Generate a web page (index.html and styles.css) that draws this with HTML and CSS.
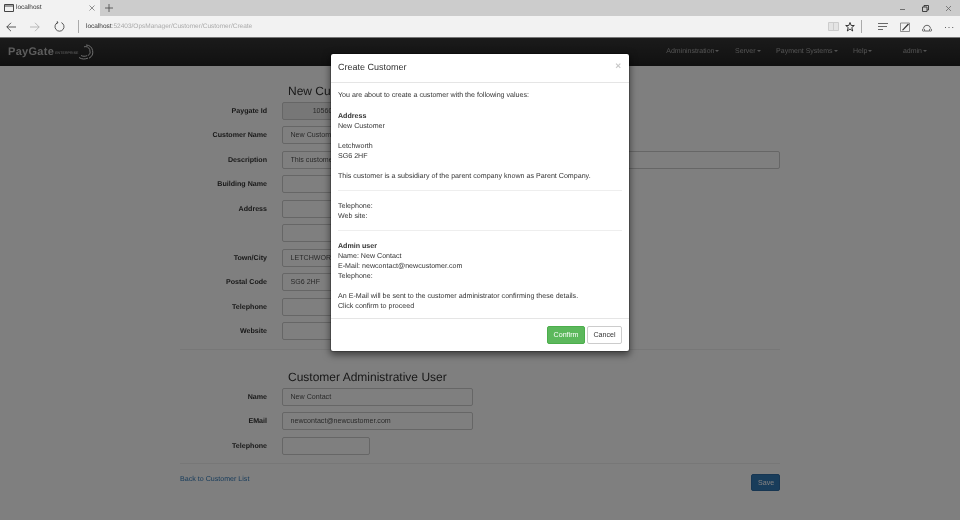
FILE: index.html
```html
<!DOCTYPE html>
<html lang="en">
<head>
<meta charset="utf-8">
<title>localhost</title>
<link rel="stylesheet" href="styles.css">
</head>
<body>
<div class="tabstrip">
  <div class="tab">
    <svg class="tab-icon" width="10" height="8" viewBox="0 0 10 8"><path d="M.5.5h9v7h-9zM.5 2h9" fill="none" stroke="#444"/></svg>
    <span class="tab-title">localhost</span>
    <svg class="tab-close" width="6" height="6" viewBox="0 0 6 6"><path d="M.5.5l5 5M5.500.5l-5 5" stroke="#666" stroke-width=".7"/></svg>
  </div>
  <svg class="tab-new" width="8" height="8" viewBox="0 0 8 8"><path d="M4 0v8M0 4h8" stroke="#444" stroke-width=".8"/></svg>
  <div class="window-controls">
    <svg width="7" height="7" viewBox="0 0 7 7"><path d="M1 4.500h5" stroke="#555" stroke-width=".8"/></svg>
    <svg width="7" height="7" viewBox="0 0 7 7"><path d="M.5 2h4.500v4.500H.5zM2 2V.5h4.500V5H5" fill="none" stroke="#333" stroke-width=".9"/></svg>
    <svg width="7" height="7" viewBox="0 0 7 7"><path d="M1 1l5 5M6 1L1 6" stroke="#666" stroke-width=".8"/></svg>
  </div>
</div>
<div class="toolbar">
  <svg class="nav-icon" width="10" height="10" viewBox="0 0 10 10"><path d="M10 5H.8M5 .8L.8 5 5 9.200" fill="none" stroke="#333" stroke-width=".8"/></svg>
  <svg class="nav-icon" width="10" height="10" viewBox="0 0 10 10"><path d="M0 5h9.200M5 .8L9.200 5 5 9.200" fill="none" stroke="#aaa" stroke-width=".8"/></svg>
  <svg class="nav-icon nav-reload" width="11" height="11" viewBox="0 0 11 11"><path d="M3.600 1.600a4.500 4.500 0 1 0 3.800 0M3.200.2l.7 1.700-1.800.6" fill="none" stroke="#333" stroke-width=".8"/></svg>
  <span class="divider"></span>
  <span class="address"><b>localhost</b>:52403/OpsManager/Customer/Customer/Create</span>
  <div class="tools">
    <svg class="tool-tight" width="11" height="9" viewBox="0 0 11 9"><path d="M.5.5h10v8H.5zM5.500.5v8" fill="#e4e4e4" stroke="#ccc"/></svg>
    <svg class="tool-tight" width="10" height="10" viewBox="0 0 10 10"><path d="M5 .5l1.200 3h3.100L6.800 5.500l.9 3.500L5 7 2.300 9l.9-3.500L.7 3.500h3.100z" fill="none" stroke="#222" stroke-width=".9"/></svg>
    <span class="divider divider-tools"></span>
    <svg width="10" height="7" viewBox="0 0 10 7"><path d="M0 .5h10M0 3.500h9M0 6.500h5" stroke="#444" stroke-width=".8"/></svg>
    <svg width="10" height="10" viewBox="0 0 10 10"><path d="M.5 1h9v8.500h-9z" fill="none" stroke="#777" stroke-width=".8"/><path d="M2 8l6-6.500L9 2.500 3 8.500z" fill="#333"/></svg>
    <svg width="10" height="10" viewBox="0 0 10 10"><path d="M1.500 6a3.600 3.600 0 0 1 7 0M2.500 9h5" fill="none" stroke="#444" stroke-width=".8"/><circle cx="1.500" cy="8" r="1.200" fill="none" stroke="#444" stroke-width=".7"/><circle cx="8.500" cy="8" r="1.200" fill="none" stroke="#444" stroke-width=".7"/></svg>
    <span class="more">···</span>
  </div>
</div>
<div class="viewport">
  <nav class="navbar">
    <div class="brand">
      <span class="brand-name">PayGate</span>
      <span class="brand-sub">ENTERPRISE</span>
      <svg class="brand-mark" width="16" height="16" viewBox="0 0 16 16"><path d="M8 1a7 7 0 0 1 3 13.200M6 2.800a5 5 0 0 1 4 9M1 13.500c3 2 6 1.800 9 .6M3 11.500c2 1 4 1 6 .2" fill="none" stroke="#ddd" stroke-width="1"/></svg>
    </div>
    <ul class="menu">
      <li>Admininstration<i class="caret"></i></li>
      <li>Server<i class="caret"></i></li>
      <li>Payment Systems<i class="caret"></i></li>
      <li>Help<i class="caret"></i></li>
      <li class="menu-user">admin<i class="caret"></i></li>
    </ul>
  </nav>
  <main class="content">
    <h2 class="heading">New Customer</h2>
    <div class="row"><label>Paygate Id</label><input class="field narrow readonly center" value="10560"></div>
    <div class="row"><label>Customer Name</label><input class="field medium" value="New Customer"></div>
    <div class="row"><label>Description</label><input class="field full" value="This customer"></div>
    <div class="row"><label>Building Name</label><input class="field medium"></div>
    <div class="row"><label>Address</label><input class="field medium"></div>
    <div class="row"><label></label><input class="field medium"></div>
    <div class="row"><label>Town/City</label><input class="field medium" value="LETCHWORTH"></div>
    <div class="row"><label>Postal Code</label><input class="field short" value="SG6 2HF"></div>
    <div class="row"><label>Telephone</label><input class="field short"></div>
    <div class="row"><label>Website</label><input class="field medium"></div>
    <hr class="rule">
    <h2 class="heading heading-admin">Customer Administrative User</h2>
    <div class="row"><label>Name</label><input class="field medium" value="New Contact"></div>
    <div class="row"><label>EMail</label><input class="field medium" value="newcontact@newcustomer.com"></div>
    <div class="row"><label>Telephone</label><input class="field short"></div>
    <hr class="rule rule-end">
    <div class="actions">
      <a class="back">Back to Customer List</a>
      <button class="save">Save</button>
    </div>
  </main>
  <div class="backdrop"></div>
  <section class="modal">
    <header class="modal-head">
      <h4>Create Customer</h4>
      <span class="close">×</span>
    </header>
    <div class="modal-body">
      <p class="intro">You are about to create a customer with the following values:</p>
      <p><b>Address</b><br>New Customer<br><br>Letchworth<br>SG6 2HF</p>
      <p class="last">This customer is a subsidiary of the parent company known as Parent Company.</p>
      <hr>
      <p class="last">Telephone:<br>Web site:</p>
      <hr>
      <p class="spaced"><b>Admin user</b><br>Name: New Contact<br>E-Mail: newcontact@newcustomer.com<br>Telephone:</p>
      <p class="last">An E-Mail will be sent to the customer administrator confirming these details.<br>Click confirm to proceed</p>
    </div>
    <footer class="modal-foot">
      <button class="confirm">Confirm</button>
      <button class="cancel">Cancel</button>
    </footer>
  </section>
</div>
</body>
</html>
```
FILE: styles.css
```css
* { box-sizing: border-box; }
html, body { margin: 0; height: 520px; overflow: hidden; }
html { background: #fff; }
body { font-family: "Liberation Sans", Arial, sans-serif; font-size: 7.1px; line-height: 10px; color: #333; background: #fff; display: flex; flex-direction: column; filter: blur(.4px); text-rendering: geometricPrecision; }

.tabstrip { height: 16px; background: #ccc; display: flex; align-items: center; flex: none; }
.tab { width: 100px; height: 16px; background: #f2f2f2; display: flex; align-items: center; padding: 0 5px 0 4px; gap: 2px; }
.tab-title { flex: 1; color: #333; font-size: 6.500px; }
.tab-new { margin-left: 5px; }
.window-controls { margin-left: auto; display: flex; gap: 16px; padding-right: 8px; }

.toolbar { height: 22px; background: #f2f2f2; display: flex; align-items: center; padding: 0 6px; flex: none; border-bottom: 1px solid #777; }
.nav-icon { margin-right: 14px; }
.nav-reload { margin-right: 13px; }
.divider { width: 1px; height: 13px; background: #aaa; margin-right: 7px; }
.address { color: #aaa; font-size: 6.500px; }
.address b { font-weight: normal; color: #333; }
.tools { margin-left: auto; display: flex; align-items: center; gap: 12px; }
.tool-tight { margin-right: -6px; }
.divider-tools { margin-right: 4px; }
.more { font-size: 9px; width: 10px; color: #444; letter-spacing: .6px; }

.viewport { position: relative; flex: 1; overflow: hidden; }
.navbar { height: 28px; background: linear-gradient(#363636, #222); display: flex; align-items: center; justify-content: space-between; padding: 0 33px 0 8px; color: #a8a8a8; }
.brand { display: flex; align-items: center; }
.brand-name { font-size: 11px; font-weight: bold; color: #bbb; letter-spacing: .3px; }
.brand-sub { font-size: 3.500px; color: #ccc; margin: 2px 0 0 1px; letter-spacing: .1px; }
.brand-mark { margin-left: -1px; }
.menu { list-style: none; margin: 0; padding: 0; display: flex; gap: 15.500px; font-size: 7px; }
.menu-user { margin-left: 15px; }
.caret { display: inline-block; margin-left: 1px; vertical-align: middle; border-top: 2px solid; border-left: 2px solid transparent; border-right: 2px solid transparent; }

.content { width: 600px; margin: 0 0 0 180px; padding-top: 18px; }
.heading { margin: 0 0 .3px 108px; font-size: 12px; line-height: 14px; font-weight: normal; }
.heading-admin { margin-top: 20px; margin-bottom: .5px; }
.row { height: 24.500px; display: flex; align-items: center; gap: 15px; }
.row label { width: 87px; text-align: right; font-weight: bold; }
.field { height: 18px; font: 7.100px "Liberation Sans", Arial, sans-serif; color: #555; background: #fff; border: 1px solid #ccc; border-radius: 2px; padding: 0 7.500px; }
.narrow { width: 81px; }
.short { width: 88px; }
.medium { width: 191px; }
.full { width: 498px; }
.readonly { background: #eee; }
.center { text-align: center; }
.rule { border: 0; border-top: 1px solid #eee; margin: 5.700px 0 0; }
.rule-end { margin-top: 5.500px; }
.actions { display: flex; justify-content: space-between; align-items: flex-start; padding-top: 10px; }
.back { color: #337ab7; }
.save { width: 29px; height: 17px; background: #337ab7; border: 1px solid #2e6da4; border-radius: 2px; color: #fff; font: 7.100px "Liberation Sans", Arial, sans-serif; }

.backdrop { position: absolute; inset: 0; background: rgba(0,0,0,.5); }
.modal { position: absolute; left: 330px; top: 15px; width: 300px; height: 299px; background: #fff; border: 1px solid rgba(0,0,0,.2); border-radius: 3px; box-shadow: 0 2.500px 7.500px rgba(0,0,0,.5); background-clip: padding-box; display: flex; flex-direction: column; }
.modal-head { height: 29px; flex: none; border-bottom: 1px solid #e5e5e5; display: flex; align-items: center; justify-content: space-between; padding: 0 8px 0 7px; }
.modal-head h4 { margin: 0 0 2px; font-size: 9px; font-weight: normal; line-height: 10px; }
.close { font-size: 10px; font-weight: bold; color: #c8c8c8; margin-top: -3px; }
.modal-body { flex: 1; padding: 7px 7px 0; }
.modal-body p { margin: 0 0 10px; }
.modal-body p.intro { margin-bottom: 10.500px; }
.modal-body p.last { margin: 0; }
.modal-body p.spaced { margin-top: 1.500px; }
.modal-body hr { border: 0; border-top: 1px solid #eee; margin: 9.500px 0 9.500px; }
.modal-foot { height: 33px; flex: none; border-top: 1px solid #e5e5e5; display: flex; justify-content: flex-end; align-items: center; gap: 2px; padding: 0 7px; }
.modal-foot button { height: 18px; font: 7.100px "Liberation Sans", Arial, sans-serif; border-radius: 2px; padding: 0; }
.confirm { width: 38px; background: #5cb85c; border: 1px solid #4cae4c; color: #fff; }
.cancel { width: 35px; background: #fff; border: 1px solid #ccc; color: #333; }
```
